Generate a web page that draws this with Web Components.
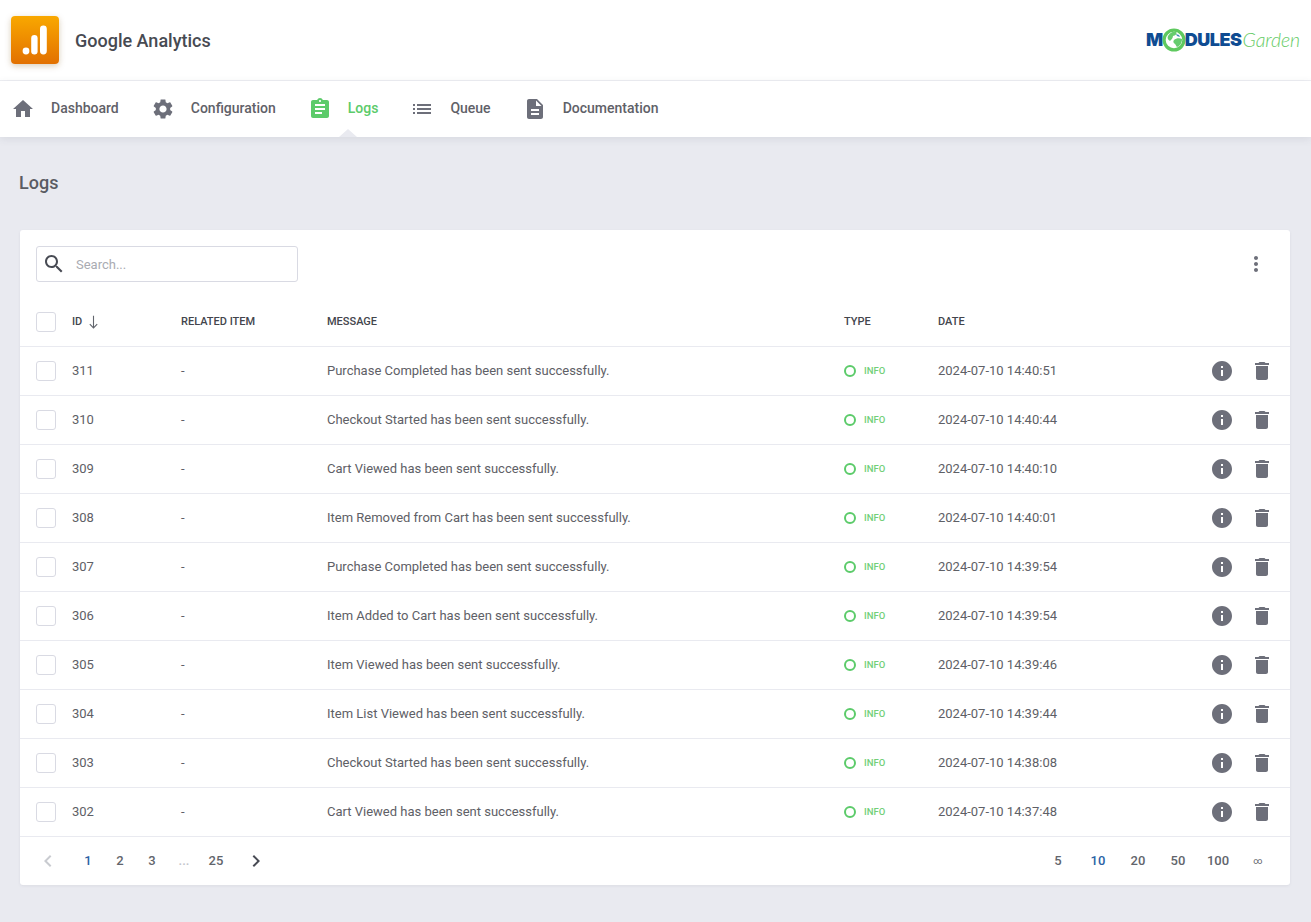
<!DOCTYPE html>
<html lang="en"><head><meta charset="utf-8"><title>Google Analytics</title>
<style>
html,body{margin:0;padding:0;background:#e9eaf0}
body{font-family:Roboto,"Liberation Sans",sans-serif;color:#5e6066}
</style></head><body>
<mg-app></mg-app>
<script>
const P={
home:'M10 20v-6h4v6h5v-8h3L12 3 2 12h3v8z',
gear:'M19.14 12.94c.04-.3.06-.61.06-.94 0-.32-.02-.64-.07-.94l2.03-1.58c.18-.14.23-.41.12-.61l-1.92-3.32c-.12-.22-.37-.29-.59-.22l-2.39.96c-.5-.38-1.03-.7-1.62-.94l-.36-2.54c-.04-.24-.24-.41-.48-.41h-3.84c-.24 0-.43.17-.47.41l-.36 2.54c-.59.24-1.13.57-1.62.94l-2.39-.96c-.22-.08-.47 0-.59.22L2.74 8.87c-.12.21-.08.47.12.61l2.03 1.58c-.05.3-.09.63-.09.94s.02.64.07.94l-2.03 1.58c-.18.14-.23.41-.12.61l1.92 3.32c.12.22.37.29.59.22l2.39-.96c.5.38 1.03.7 1.62.94l.36 2.54c.05.24.24.41.48.41h3.84c.24 0 .44-.17.47-.41l.36-2.54c.59-.24 1.13-.56 1.62-.94l2.39.96c.22.08.47 0 .59-.22l1.92-3.32c.12-.22.07-.47-.12-.61l-2.01-1.58zM12 15.6c-1.98 0-3.6-1.62-3.6-3.6s1.62-3.6 3.6-3.6 3.6 1.62 3.6 3.6-1.62 3.6-3.6 3.6z',
clip:'M19 3h-4.18C14.4 1.84 13.3 1 12 1c-1.3 0-2.4.84-2.82 2H5c-1.1 0-2 .9-2 2v14c0 1.1.9 2 2 2h14c1.1 0 2-.9 2-2V5c0-1.1-.9-2-2-2zm-7 0c.55 0 1 .45 1 1s-.45 1-1 1-1-.45-1-1 .45-1 1-1zm2 14H7v-2h7v2zm3-4H7v-2h10v2zm0-4H7V7h10v2z',
list:'M3 13h2v-2H3v2zm0 4h2v-2H3v2zm0-8h2V7H3v2zm4 4h14v-2H7v2zm0 4h14v-2H7v2zM7 7v2h14V7H7z',
doc:'M14 2H6c-1.1 0-1.99.9-1.99 2L4 20c0 1.1.89 2 1.99 2H18c1.1 0 2-.9 2-2V8l-6-6zm2 16H8v-2h8v2zm0-4H8v-2h8v2zm-3-5V3.5L18.5 9H13z',
search:'M15.5 14h-.79l-.28-.27C15.41 12.59 16 11.11 16 9.5 16 5.91 13.09 3 9.5 3S3 5.91 3 9.5 5.91 16 9.5 16c1.61 0 3.09-.59 4.23-1.57l.27.28v.79l5 4.99L20.49 19l-4.99-5zm-6 0C7.01 14 5 11.99 5 9.5S7.01 5 9.5 5 14 7.01 14 9.5 11.99 14 9.5 14z',
more:'M12 8c1.1 0 2-.9 2-2s-.9-2-2-2-2 .9-2 2 .9 2 2 2zm0 2c-1.1 0-2 .9-2 2s.9 2 2 2 2-.9 2-2-.9-2-2-2zm0 6c-1.1 0-2 .9-2 2s.9 2 2 2 2-.9 2-2-.9-2-2-2z',
info:'M12 2C6.48 2 2 6.48 2 12s4.48 10 10 10 10-4.48 10-10S17.52 2 12 2zm1 15h-2v-6h2v6zm0-8h-2V7h2v2z',
trash:'M6 19c0 1.1.9 2 2 2h8c1.1 0 2-.9 2-2V7H6v12zM19 4h-3.5l-1-1h-5l-1 1H5v2h14V4z',
prev:'M15.41 7.41L14 6l-6 6 6 6 1.41-1.41L10.83 12z',
next:'M10 6L8.59 7.41 13.17 12l-4.58 4.59L10 18l6-6z'};
const svg=(n,s=24,c='currentColor')=>`<svg xmlns="http://www.w3.org/2000/svg" width="${s}" height="${s}" viewBox="0 0 24 24" fill="${c}" style="display:block;flex:none"><path d="${P[n]}"/></svg>`;
class Base extends HTMLElement{
  connectedCallback(){ if(!this.shadowRoot){this.attachShadow({mode:'open'}).innerHTML=this.render();} }
}
const def=(n,c)=>customElements.define(n,c);

def('mg-logo',class extends Base{render(){return `<style>
:host{display:flex;align-items:center;height:24px}
.b{font:900 18px/24px Inter,"Liberation Sans",sans-serif;color:#0f4c92;letter-spacing:-.5px}
.g{font:italic 300 19.5px/24px Lato,"Liberation Sans",sans-serif;color:#66cc66;letter-spacing:-.1px;margin-left:1px}
svg{display:block;margin:0 -1px}
</style><span class="b">M</span><svg width="24" height="24" viewBox="0 0 24 24"><circle cx="12" cy="12" r="9.9" fill="#fff" stroke="#5fc95f" stroke-width="3.2"/><path d="M6 8c2-4 6-5 8-4 2 1-1 4-3 4 0 2-2 4-3 5-2-1-3-3-2-5zM12 12c2-2 6-2 8-1 0 4-2 7-5 8-1-1-1-2-2-3-2-1-2-3-1-4z" fill="#66cc6e"/><path d="M14 6l3 1 1 2-3-1z" fill="#3f8fb5"/></svg><span class="b">DULES</span><span class="g">Garden</span>`}});

def('mg-brand',class extends Base{render(){return `<style>
:host{display:flex;align-items:center;justify-content:space-between;height:80px;padding:0 11px;border-bottom:1px solid #eeeff3;background:#fff}
.l{display:flex;align-items:center;gap:16px}
.ic{width:48px;height:48px;border-radius:4px;background:linear-gradient(180deg,#f9a800,#e27000);box-shadow:0 2px 6px rgba(120,80,0,.28);display:block}
h1{margin:0;padding-top:2px;font:500 18px/24px Roboto,sans-serif;color:#474a52}
</style><div class="l"><svg class="ic" viewBox="0 0 48 48"><circle cx="15" cy="35" r="3.4" fill="#fff"/><rect x="20.2" y="19" width="6.4" height="19.4" rx="3.2" fill="#fff"/><rect x="29" y="9.6" width="6.8" height="28.8" rx="3.4" fill="#fff"/></svg><h1>Google Analytics</h1></div><mg-logo></mg-logo>`}});

def('nav-item',class extends Base{render(){const a=this.hasAttribute('active');return `<style>
:host{display:flex;align-items:center;gap:16px;height:56px;position:relative;font:500 14px/20px Roboto,sans-serif;color:${a?'#5ccb6a':'#5f6168'}}
svg{color:${a?'#5ccb6a':'#6d6f7a'}}
span{padding-bottom:2px}
.c{position:absolute;left:31px;bottom:0;width:0;height:0;border-left:9px solid transparent;border-right:9px solid transparent;border-bottom:8px solid #e9eaf0}
</style>${svg(this.getAttribute('icon'))}<span><slot></slot></span>${a?'<i class="c"></i>':''}`}});

def('mg-nav',class extends Base{render(){return `<style>
:host{display:flex;gap:32px;padding:0 11px;background:#fff;height:56px;box-shadow:0 2px 8px rgba(60,64,90,.1);position:relative}
</style><slot></slot>`}});

def('search-box',class extends Base{render(){return `<style>
:host{display:flex;align-items:center;box-sizing:border-box;width:262px;height:36px;border:1px solid #d9dae3;border-radius:3px;padding-left:5px;gap:10px;color:#484b54}
span{font:400 13px/20px Roboto,sans-serif;color:#a9abb2;padding-top:2px}
</style>${svg('search')}<span>Search...</span>`}});

def('mg-check',class extends Base{render(){return `<style>
:host{display:block;box-sizing:border-box;width:20px;height:20px;border:1px solid #d9dae3;border-radius:3px;background:#fff}
</style>`}});

const cols=`display:grid;grid-template-columns:36px 109px 146px 517px 94px 1fr 64px;align-items:center;padding:0 16px;`;
def('log-head',class extends Base{render(){return `<style>
:host{${cols}height:48px;border-bottom:1px solid #e9eaf0;font:500 11px/16px Roboto,sans-serif;color:#43454c}
.id{display:flex;align-items:center;gap:7px}
</style><mg-check></mg-check><div class="id"><span>ID</span><svg width="9" height="14" viewBox="0 0 9 14" fill="none" stroke="#62656d" stroke-width="1.1" style="display:block"><path d="M4.5 .8V13M.8 9.2l3.7 3.8 3.7-3.8"/></svg></div><div>RELATED ITEM</div><div>MESSAGE</div><div>TYPE</div><div>DATE</div><div></div>`}});

def('log-row',class extends Base{render(){const g=n=>this.getAttribute(n);return `<style>
:host{${cols}height:48px;border-bottom:1px solid #e9eaf0;font:400 13px/20px Roboto,sans-serif;color:#5e6066}
.t{display:flex;align-items:center;gap:8px;color:#72cf78;font:500 9.5px/12px Roboto,sans-serif}
.t i{display:block;box-sizing:border-box;width:12px;height:12px;border:2px solid #5ccb6a;border-radius:50%}
.a{display:flex;gap:16px;color:#6d6f7a;justify-content:flex-end}
</style><mg-check></mg-check><div>${g('id')}</div><div>-</div><div>${g('msg')}</div><div class="t"><i></i><span>INFO</span></div><div>${g('date')}</div><div class="a">${svg('info')}${svg('trash')}</div>`}});

def('pager-cell',class extends Base{render(){const a=this.hasAttribute('active'),d=this.hasAttribute('dim'),s=this.hasAttribute('small');return `<style>
:host{display:flex;align-items:center;justify-content:center;width:${this.getAttribute('w')||32}px;height:32px;font:${s?'400 9px':'500 13px'}/20px Roboto,sans-serif;color:${a?'#2b62a5':d?'#c3c5cb':'#62656c'}}
</style><slot></slot>`}});

def('log-foot',class extends Base{render(){
const pg=['1','2','3','...','25'].map((t,i)=>`<pager-cell ${i==0?'active':''} ${t=='...'?'dim':''}>${t}</pager-cell>`).join('');
const sz=['5','10','20','50','100','∞'].map((t,i)=>`<pager-cell w="40" ${i==1?'active':''} ${t=='∞'?'small':''}>${t}</pager-cell>`).join('');
return `<style>
:host{display:flex;align-items:center;justify-content:space-between;height:48px;padding:0 12px}
.g{display:flex;align-items:center}
.arr{width:32px;height:32px;display:flex;align-items:center;justify-content:center}
</style><div class="g"><div class="arr" style="color:#c9cbd0;margin-right:8px">${svg('prev')}</div>${pg}<div class="arr" style="color:#484b54;margin-left:8px">${svg('next')}</div></div><div class="g">${sz}</div>`}});

def('log-card',class extends Base{render(){return `<style>
:host{display:block;background:#fff;border-radius:3px;box-shadow:0 1px 3px rgba(60,64,90,.08)}
.tb{display:flex;align-items:center;justify-content:space-between;padding:16px 22px 16px 16px;color:#6d6f7a}
</style><div class="tb"><search-box></search-box>${svg('more')}</div><slot></slot><log-foot></log-foot>`}});

const rows=[[311,'Purchase Completed','14:40:51'],[310,'Checkout Started','14:40:44'],[309,'Cart Viewed','14:40:10'],[308,'Item Removed from Cart','14:40:01'],[307,'Purchase Completed','14:39:54'],[306,'Item Added to Cart','14:39:54'],[305,'Item Viewed','14:39:46'],[304,'Item List Viewed','14:39:44'],[303,'Checkout Started','14:38:08'],[302,'Cart Viewed','14:37:48']];

def('mg-app',class extends Base{render(){return `<style>
:host{display:block;min-height:922px;background:#e9eaf0}
h2{margin:0;font:500 18px/24px Roboto,sans-serif;color:#5a5c63;padding:34px 19px 35px}
log-card{margin:0 21px 0 20px}
</style><mg-brand></mg-brand><mg-nav>
<nav-item icon="home">Dashboard</nav-item><nav-item icon="gear">Configuration</nav-item><nav-item icon="clip" active>Logs</nav-item><nav-item icon="list">Queue</nav-item><nav-item icon="doc">Documentation</nav-item>
</mg-nav><h2>Logs</h2><log-card><log-head></log-head>${rows.map(r=>`<log-row id="${r[0]}" msg="${r[1]} has been sent successfully." date="2024-07-10 ${r[2]}"></log-row>`).join('')}</log-card>`}});
</script>
</body></html>
